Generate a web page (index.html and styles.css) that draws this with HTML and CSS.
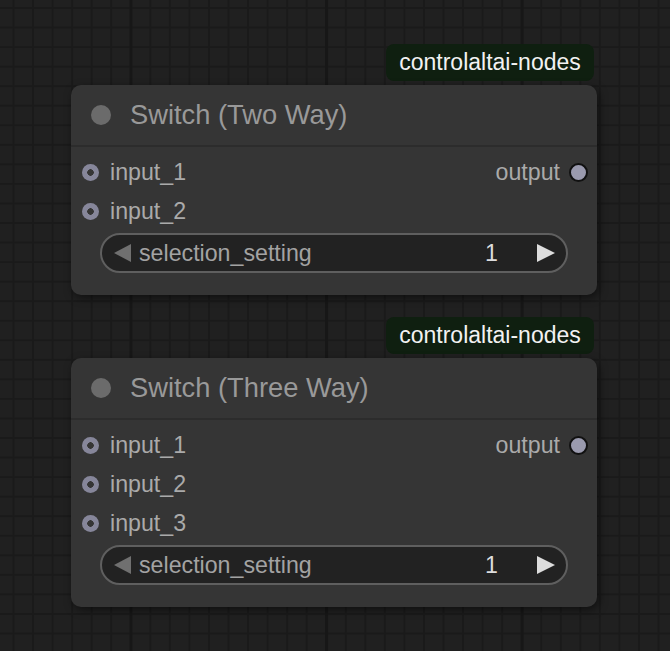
FILE: index.html
```html
<!DOCTYPE html>
<html lang="en">
<head>
    <meta charset="UTF-8">
    <meta name="viewport" content="width=device-width, initial-scale=1.0">
    <title>Switch nodes</title>
    <link rel="stylesheet" href="styles.css">
</head>
<body>
    <div class="canvas">
        <div class="node-group group-two">
            <div class="badge">controlaltai-nodes</div>
            <div class="node">
                <div class="node-title">
                    <span class="title-dot"></span>
                    <span class="title-text">Switch (Two Way)</span>
                </div>
                <div class="node-body">
                    <div class="slot-row">
                        <div class="slot-in"><span class="in-dot"></span>input_1</div>
                        <div class="slot-out">output<span class="out-dot"></span></div>
                    </div>
                    <div class="slot-row">
                        <div class="slot-in"><span class="in-dot"></span>input_2</div>
                    </div>
                    <div class="widget">
                        <span class="arrow arrow-left"></span>
                        <span class="widget-name">selection_setting</span>
                        <span class="widget-value">1</span>
                        <span class="arrow arrow-right"></span>
                    </div>
                </div>
            </div>
        </div>

        <div class="node-group group-three">
            <div class="badge">controlaltai-nodes</div>
            <div class="node">
                <div class="node-title">
                    <span class="title-dot"></span>
                    <span class="title-text">Switch (Three Way)</span>
                </div>
                <div class="node-body">
                    <div class="slot-row">
                        <div class="slot-in"><span class="in-dot"></span>input_1</div>
                        <div class="slot-out">output<span class="out-dot"></span></div>
                    </div>
                    <div class="slot-row">
                        <div class="slot-in"><span class="in-dot"></span>input_2</div>
                    </div>
                    <div class="slot-row">
                        <div class="slot-in"><span class="in-dot"></span>input_3</div>
                    </div>
                    <div class="widget">
                        <span class="arrow arrow-left"></span>
                        <span class="widget-name">selection_setting</span>
                        <span class="widget-value">1</span>
                        <span class="arrow arrow-right"></span>
                    </div>
                </div>
            </div>
        </div>
    </div>
</body>
</html>
```

FILE: styles.css
```css
body {
    margin: 0;
    padding: 0;
    font-family: "Liberation Sans", Arial, sans-serif;
    background-color: #202020;
    overflow: hidden;
}
.canvas {
    position: relative;
    width: 670px;
    height: 651px;
    background-color: #202020;
    background-image:
        linear-gradient(to right, #171717 3px, transparent 3px),
        linear-gradient(to right, #1a1a1a 2px, transparent 2px),
        linear-gradient(to bottom, #1a1a1a 2px, transparent 2px);
    background-size: 195.6px 100%, 19.56px 100%, 100% 19.56px;
    background-position: 129.5px 0, 12.5px 0, 0 7px;
}
.node-group {
    position: absolute;
    left: 71px;
    width: 526px;
    display: flex;
    flex-direction: column;
    align-items: flex-end;
}
.group-two {
    top: 44px;
}
.group-three {
    top: 317px;
}
.badge {
    width: 208px;
    height: 37px;
    margin-right: 3px;
    margin-bottom: 4px;
    background: #0f1f10;
    color: #f2f2f2;
    border-radius: 8px;
    font-size: 23px;
    display: flex;
    align-items: center;
    justify-content: center;
}
.node {
    width: 100%;
    background: #353535;
    border-radius: 10px;
    box-shadow: 2px 3px 8px rgba(0, 0, 0, 0.5);
}
.node-title {
    height: 62px;
    box-sizing: border-box;
    border-bottom: 2px solid #2c2c2c;
    display: flex;
    align-items: center;
    padding-left: 20px;
    gap: 19px;
}
.title-dot {
    width: 20px;
    height: 20px;
    border-radius: 50%;
    background: #6b6b6b;
}
.title-text {
    color: #999999;
    font-size: 27.3px;
}
.node-body {
    padding: 6px 9px 22px 11px;
}
.slot-row {
    height: 39px;
    display: flex;
    align-items: center;
    justify-content: space-between;
    font-size: 23.2px;
    color: #aaaaaa;
}
.slot-in {
    display: flex;
    align-items: center;
    gap: 11px;
}
.in-dot {
    width: 17px;
    height: 17px;
    border-radius: 50%;
    background: radial-gradient(circle, #353535 3px, #86869a 3.5px);
}
.slot-out {
    display: flex;
    align-items: center;
    gap: 9px;
}
.out-dot {
    width: 15px;
    height: 15px;
    border-radius: 50%;
    background: #9a9aae;
    border: 2px solid #111111;
}
.widget {
    margin: 2px 20px 0 18px;
    height: 40px;
    box-sizing: border-box;
    border: 2px solid #5f5f5f;
    border-radius: 20px;
    background: #222222;
    display: flex;
    align-items: center;
    padding: 0 11px 0 12px;
    font-size: 23.2px;
}
.arrow {
    width: 0;
    height: 0;
    border-top: 9px solid transparent;
    border-bottom: 9px solid transparent;
}
.arrow-left {
    border-right: 17px solid #707070;
    margin-right: 8px;
}
.arrow-right {
    border-left: 18px solid #dddddd;
}
.widget-name {
    color: #a3a3a3;
    flex: 1;
}
.widget-value {
    color: #dddddd;
    margin-right: 39px;
}
```
